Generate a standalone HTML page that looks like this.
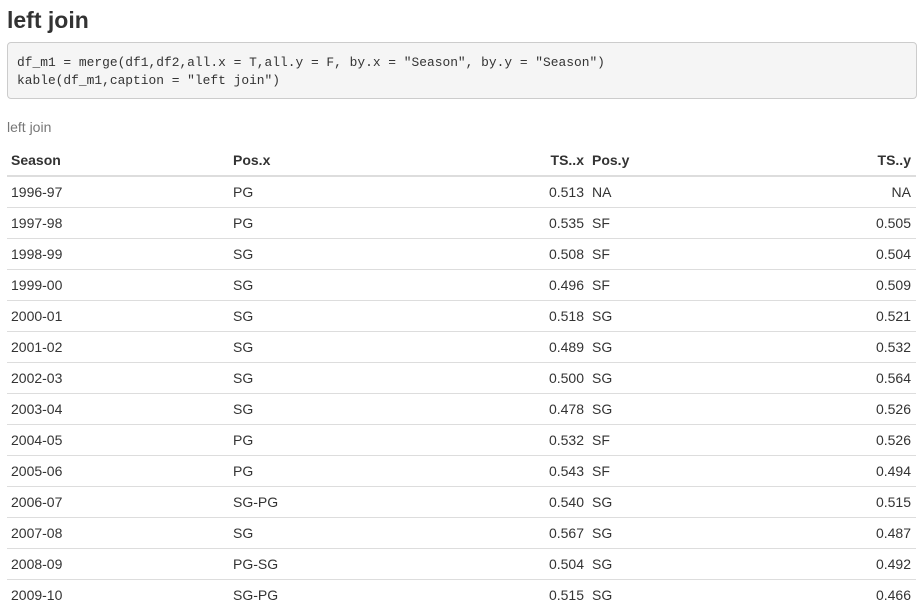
<!DOCTYPE html>
<html><head><meta charset="utf-8"><style>
body{margin:0;background:#fff;font-family:"Liberation Sans",Arial,sans-serif;color:#333;width:923px;height:611px;overflow:hidden;position:relative}
h1{position:absolute;left:7px;top:4px;margin:0;font-size:23px;font-weight:bold;color:#333;line-height:32px}
pre{position:absolute;left:7px;top:42px;width:891px;height:36px;margin:0;padding:11px 8px 8px 9px;background:#f5f5f5;border:1px solid #ccc;border-radius:4px;font-family:"Liberation Mono",monospace;font-size:12.9px;line-height:18px;color:#333}
.cap{position:absolute;left:7px;top:119px;font-size:14px;color:#777}
table{position:absolute;left:7px;top:144px;border-collapse:collapse;width:909px;font-size:14px;table-layout:fixed}
th,td{padding:0 5px 0 4px;height:30px;line-height:30px;border-top:1px solid #ddd;white-space:nowrap}
th{font-weight:bold;border-top:none;border-bottom:2px solid #ddd;height:31px}
.r{text-align:right}
td.p,th.p{padding-left:3px}
</style></head><body>
<h1>left join</h1>
<pre>df_m1 = merge(df1,df2,all.x = T,all.y = F, by.x = "Season", by.y = "Season")
kable(df_m1,caption = "left join")</pre>
<div class="cap">left join</div>
<table>
<colgroup><col style="width:222px"><col style="width:290px"><col style="width:70px"><col style="width:110px"><col style="width:217px"></colgroup>
<tr><th style="text-align:left">Season</th><th style="text-align:left">Pos.x</th><th class="r">TS..x</th><th class="p" style="text-align:left">Pos.y</th><th class="r">TS..y</th></tr>
<tr><td>1996-97</td><td>PG</td><td class="r">0.513</td><td class="p">NA</td><td class="r">NA</td></tr>
<tr><td>1997-98</td><td>PG</td><td class="r">0.535</td><td class="p">SF</td><td class="r">0.505</td></tr>
<tr><td>1998-99</td><td>SG</td><td class="r">0.508</td><td class="p">SF</td><td class="r">0.504</td></tr>
<tr><td>1999-00</td><td>SG</td><td class="r">0.496</td><td class="p">SF</td><td class="r">0.509</td></tr>
<tr><td>2000-01</td><td>SG</td><td class="r">0.518</td><td class="p">SG</td><td class="r">0.521</td></tr>
<tr><td>2001-02</td><td>SG</td><td class="r">0.489</td><td class="p">SG</td><td class="r">0.532</td></tr>
<tr><td>2002-03</td><td>SG</td><td class="r">0.500</td><td class="p">SG</td><td class="r">0.564</td></tr>
<tr><td>2003-04</td><td>SG</td><td class="r">0.478</td><td class="p">SG</td><td class="r">0.526</td></tr>
<tr><td>2004-05</td><td>PG</td><td class="r">0.532</td><td class="p">SF</td><td class="r">0.526</td></tr>
<tr><td>2005-06</td><td>PG</td><td class="r">0.543</td><td class="p">SF</td><td class="r">0.494</td></tr>
<tr><td>2006-07</td><td>SG-PG</td><td class="r">0.540</td><td class="p">SG</td><td class="r">0.515</td></tr>
<tr><td>2007-08</td><td>SG</td><td class="r">0.567</td><td class="p">SG</td><td class="r">0.487</td></tr>
<tr><td>2008-09</td><td>PG-SG</td><td class="r">0.504</td><td class="p">SG</td><td class="r">0.492</td></tr>
<tr><td>2009-10</td><td>SG-PG</td><td class="r">0.515</td><td class="p">SG</td><td class="r">0.466</td></tr>
</table>
</body></html>
